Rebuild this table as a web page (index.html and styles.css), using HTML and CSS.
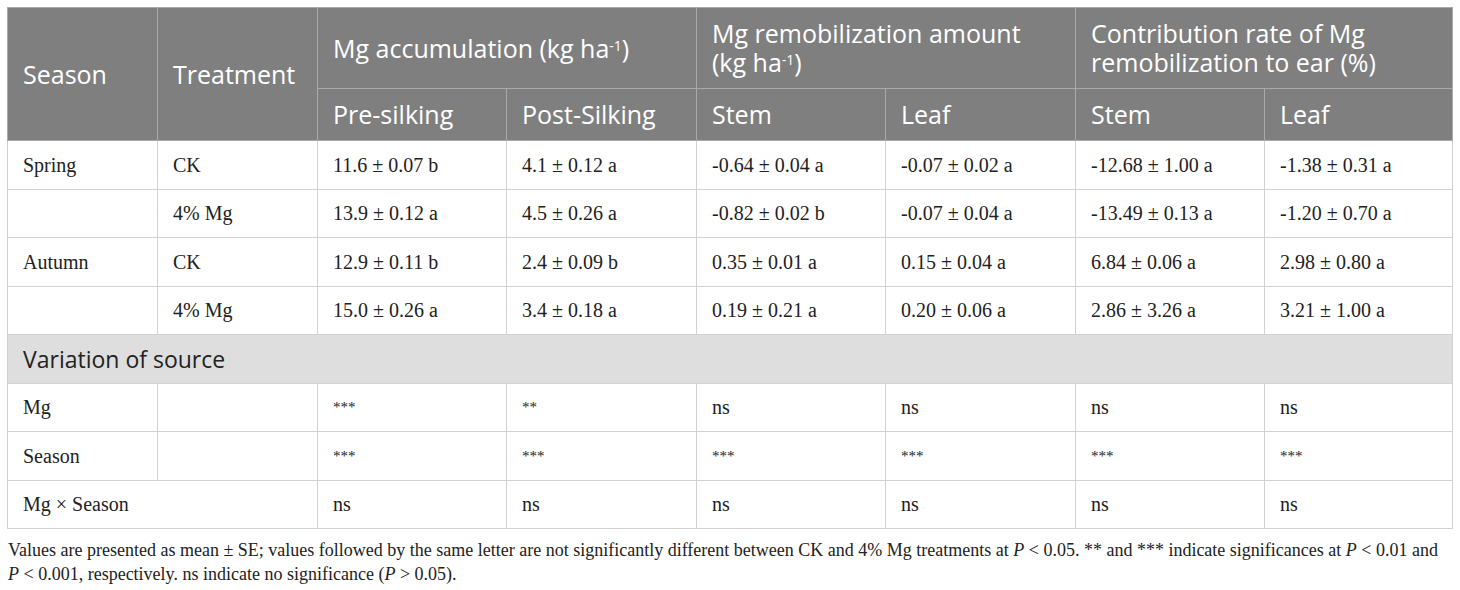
FILE: index.html
```html
<!DOCTYPE html>
<html lang="en">
<head>
    <meta charset="UTF-8">
    <title>Mg accumulation and remobilization</title>
    <link rel="stylesheet" href="styles.css">
</head>
<body>
    <div class="wrap">
        <table class="data-table">
            <colgroup>
                <col class="c-season">
                <col class="c-treat">
                <col class="c-val"><col class="c-val2">
                <col class="c-val"><col class="c-val2">
                <col class="c-val"><col class="c-last">
            </colgroup>
            <thead>
                <tr class="head-top">
                    <th rowspan="2">Season</th>
                    <th rowspan="2">Treatment</th>
                    <th colspan="2">Mg accumulation (kg ha<sup>-1</sup>)</th>
                    <th colspan="2">Mg remobilization amount (kg ha<sup>-1</sup>)</th>
                    <th colspan="2">Contribution rate of Mg remobilization to ear (%)</th>
                </tr>
                <tr class="head-sub">
                    <th>Pre-silking</th>
                    <th>Post-Silking</th>
                    <th>Stem</th>
                    <th>Leaf</th>
                    <th>Stem</th>
                    <th>Leaf</th>
                </tr>
            </thead>
            <tbody>
                <tr>
                    <td>Spring</td><td>CK</td>
                    <td>11.6 ± 0.07 b</td><td>4.1 ± 0.12 a</td>
                    <td>-0.64 ± 0.04 a</td><td>-0.07 ± 0.02 a</td>
                    <td>-12.68 ± 1.00 a</td><td>-1.38 ± 0.31 a</td>
                </tr>
                <tr>
                    <td></td><td>4% Mg</td>
                    <td>13.9 ± 0.12 a</td><td>4.5 ± 0.26 a</td>
                    <td>-0.82 ± 0.02 b</td><td>-0.07 ± 0.04 a</td>
                    <td>-13.49 ± 0.13 a</td><td>-1.20 ± 0.70 a</td>
                </tr>
                <tr>
                    <td>Autumn</td><td>CK</td>
                    <td>12.9 ± 0.11 b</td><td>2.4 ± 0.09 b</td>
                    <td>0.35 ± 0.01 a</td><td>0.15 ± 0.04 a</td>
                    <td>6.84 ± 0.06 a</td><td>2.98 ± 0.80 a</td>
                </tr>
                <tr>
                    <td></td><td>4% Mg</td>
                    <td>15.0 ± 0.26 a</td><td>3.4 ± 0.18 a</td>
                    <td>0.19 ± 0.21 a</td><td>0.20 ± 0.06 a</td>
                    <td>2.86 ± 3.26 a</td><td>3.21 ± 1.00 a</td>
                </tr>
                <tr class="section">
                    <td colspan="8">Variation of source</td>
                </tr>
                <tr>
                    <td>Mg</td><td></td>
                    <td class="stars">***</td><td class="stars">**</td>
                    <td>ns</td><td>ns</td><td>ns</td><td>ns</td>
                </tr>
                <tr>
                    <td>Season</td><td></td>
                    <td class="stars">***</td><td class="stars">***</td>
                    <td class="stars">***</td><td class="stars">***</td>
                    <td class="stars">***</td><td class="stars">***</td>
                </tr>
                <tr>
                    <td colspan="2">Mg × Season</td>
                    <td>ns</td><td>ns</td><td>ns</td><td>ns</td><td>ns</td><td>ns</td>
                </tr>
            </tbody>
        </table>
        <p class="note">Values are presented as mean ± SE; values followed by the same letter are not significantly different between CK and 4% Mg treatments at <i>P</i> &lt; 0.05. ** and *** indicate significances at <i>P</i> &lt; 0.01 and<br><i>P</i> &lt; 0.001, respectively. ns indicate no significance (<i>P</i> &gt; 0.05).</p>
    </div>
</body>
</html>
```

FILE: styles.css
```css
body {
    margin: 0;
    background-color: #fff;
}
.wrap {
    padding: 7px 8px 0 7px;
}
.data-table {
    width: 1445px;
    table-layout: fixed;
    border-collapse: collapse;
    font-family: "Liberation Serif", serif;
    font-size: 20px;
    color: #222;
}
.c-season { width: 150px; }
.c-treat { width: 160px; }
.c-val { width: 189px; }
.c-val2 { width: 190px; }
.c-last { width: 188px; }
th {
    background-color: #7f7f7f;
    color: #fff;
    font-family: "Open Sans", sans-serif;
    font-weight: normal;
    font-size: 25px;
    line-height: 29px;
    text-align: left;
    padding: 0 15px;
    border: 1px solid #a9a9a9;
}
th sup {
    font-size: 14px;
    line-height: 0;
    vertical-align: 7px;
}
.head-top th {
    height: 80px;
}
.head-sub th {
    height: 51px;
}
td {
    height: 47.5px;
    padding: 0 15px;
    line-height: 24px;
    border: 1px solid #d2d2d2;
    vertical-align: middle;
}
.stars {
    font-size: 15px;
}
.section td {
    background-color: #dedede;
    font-family: "Open Sans", sans-serif;
    font-size: 23px;
    color: #222;
}
.note {
    margin: 9px 0 0 1px;
    font-family: "Liberation Serif", serif;
    font-size: 18px;
    line-height: 24px;
    color: #222;
}
```
